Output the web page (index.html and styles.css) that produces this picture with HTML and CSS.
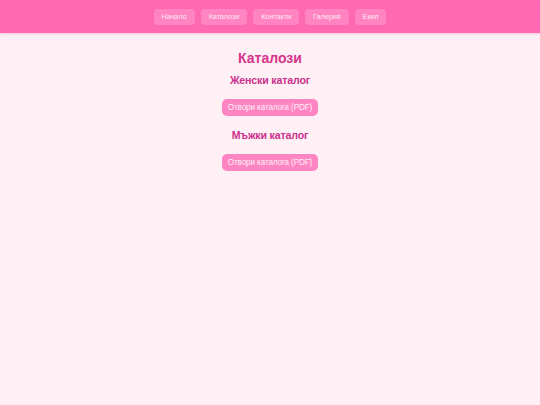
FILE: index.html
```html
<!DOCTYPE html>
<html lang="bg">
<head>
<meta charset="utf-8">
<title>Каталози</title>
<link rel="stylesheet" href="styles.css">
</head>
<body>
<header class="topbar">
  <nav class="nav">
    <a class="nav-link" href="#">Начало</a>
    <a class="nav-link" href="#">Каталози</a>
    <a class="nav-link" href="#">Контакти</a>
    <a class="nav-link" href="#">Галерия</a>
    <a class="nav-link" href="#">Екип</a>
  </nav>
</header>
<main class="content">
  <h1 class="title">Каталози</h1>
  <section class="catalog">
    <h2 class="catalog-title">Женски каталог</h2>
    <a class="btn" href="#">Отвори каталога (PDF)</a>
  </section>
  <section class="catalog">
    <h2 class="catalog-title">Мъжки каталог</h2>
    <a class="btn" href="#">Отвори каталога (PDF)</a>
  </section>
</main>
</body>
</html>
```
FILE: styles.css
```css
* { box-sizing: border-box; }
html, body { margin: 0; padding: 0; }
body {
  background: #fff0f6;
  font-family: "Liberation Sans", Arial, sans-serif;
  min-height: 405px;
}
.topbar {
  background: #ff69b4;
  height: 33px;
  display: flex;
  justify-content: center;
  align-items: center;
  box-shadow: 0 1px 2px rgba(200, 60, 130, 0.25);
}
.nav {
  display: flex;
  gap: 6px;
}
.nav-link {
  display: block;
  height: 16px;
  line-height: 16px;
  padding: 0 8px;
  font-size: 7.4px;
  letter-spacing: -0.12px;
  color: #ffe6f2;
  text-decoration: none;
  background: rgba(255, 255, 255, 0.18);
  border-radius: 4px;
}
.content {
  display: flex;
  flex-direction: column;
  align-items: center;
  padding-top: 16px;
}
.title {
  margin: 0;
  font-size: 14px;
  line-height: 18px;
  color: #d6338a;
  font-weight: bold;
}
.catalog {
  display: flex;
  flex-direction: column;
  align-items: center;
}
.catalog-title {
  margin: 6px 0 0;
  font-size: 10.6px;
  letter-spacing: -0.15px;
  line-height: 14px;
  color: #c9318a;
  font-weight: bold;
}
.catalog + .catalog .catalog-title { margin-top: 12px; }
.btn {
  margin-top: 12px;
  display: block;
  height: 17px;
  line-height: 17px;
  padding: 0 6px;
  font-size: 8.2px;
  letter-spacing: -0.15px;
  color: #ffeef7;
  background: #ff85c2;
  border-radius: 5px;
  text-decoration: none;
}
```
